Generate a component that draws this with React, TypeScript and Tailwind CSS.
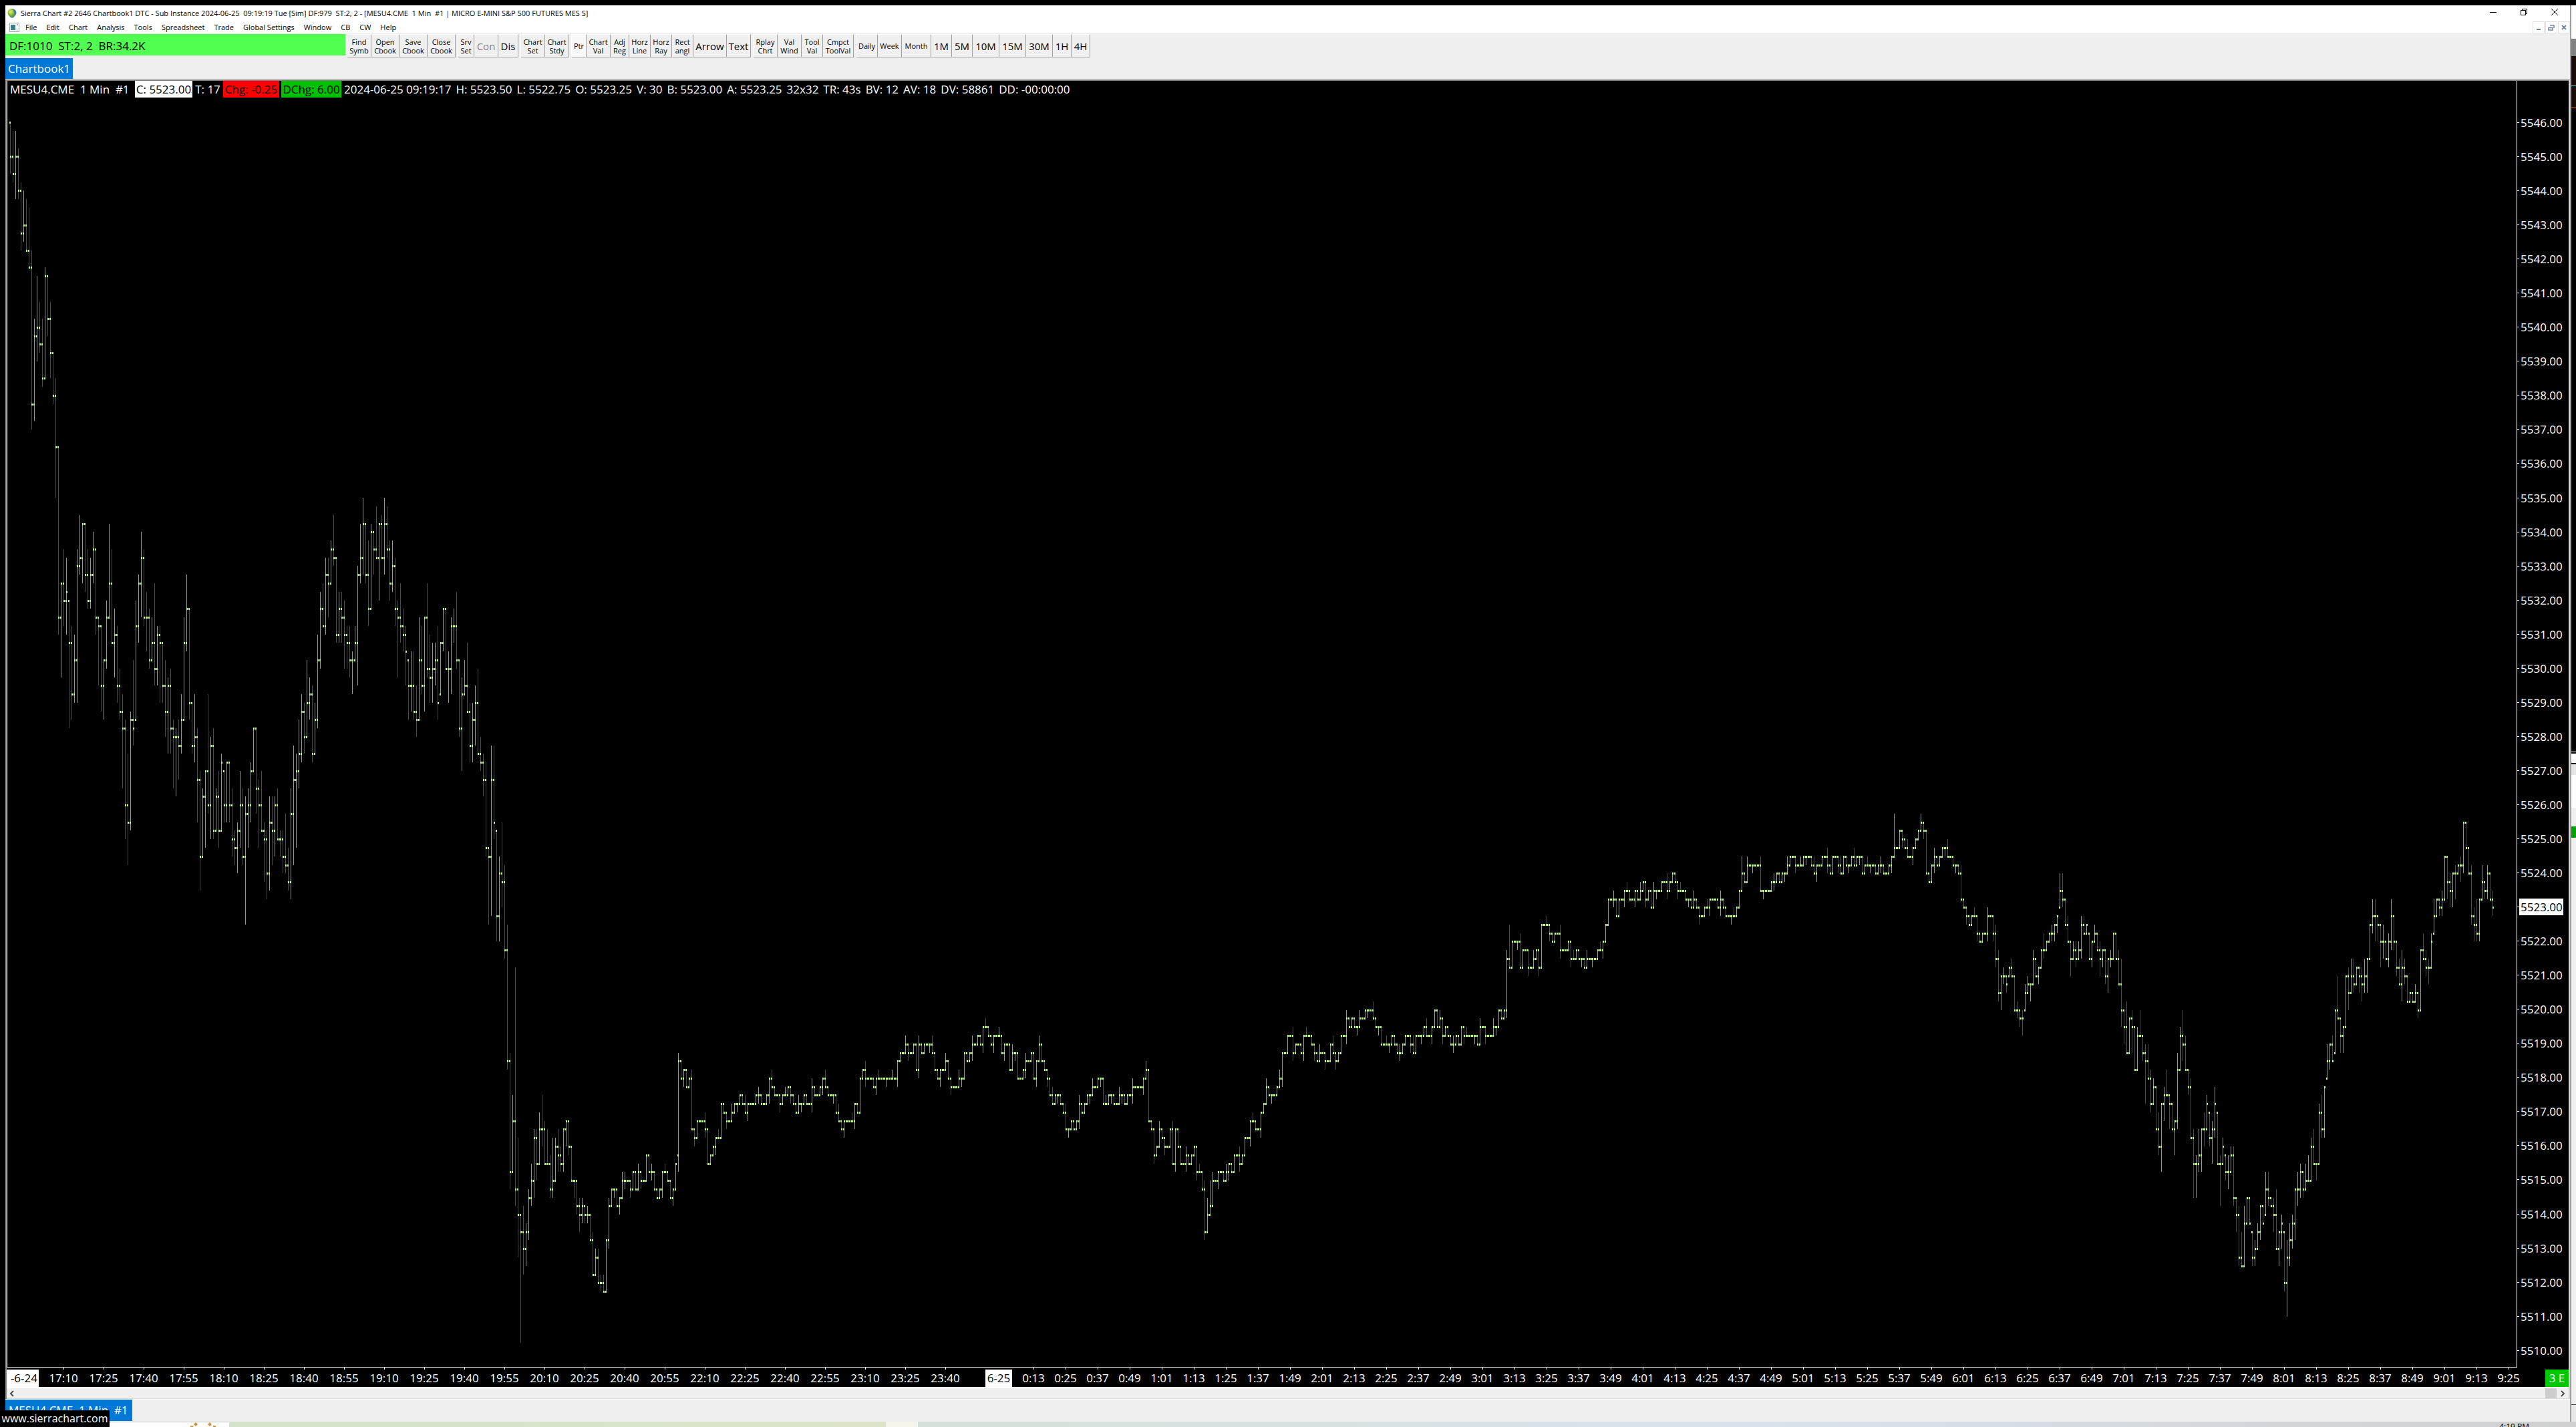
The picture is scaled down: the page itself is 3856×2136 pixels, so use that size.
import { ReactNode } from "react";
import clsx from "clsx";

type Bar = { x: number; open: number; high: number; low: number; close: number };

// All prices below are counted in quarter point ticks above 5510.00
const BASE = 5510;
const TICK = 12.7725;
const BAR_STEP = 4;

// high, low, close
const EVENING = `144 138 140,143 137 138,143 135 140,141 135 136,137 129 131,136 130 132,135 129 129,134 127 127,129 108 111,121 109 119,
126 116 120,123 117 118,121 113 114,127 114 126,126 119 121,123 114 117,117 111 112,114 100 106,106 84 86,90 79 90,
94 85 88,93 84 89,88 73 83,85 74 77,84 76 81,94 76 92,98 91 93,97 90 97,97 89 91,94 87 88,
93 87 91,96 90 94,94 84 86,86 78 85,85 75 78,81 74 81,88 80 86,97 86 90,94 83 83,87 79 84,
85 76 78,80 74 75,77 66 73,74 60 64,70 57 62,75 61 74,81 71 73,88 74 85,91 83 90,96 86 93,
94 85 86,89 82 86,87 80 81,86 81 83,90 78 80,85 78 84,85 76 83,83 76 78,81 72 75,79 70 78,
80 70 73,74 66 72,73 65 72,74 67 71,77 70 74,86 74 83,91 82 87,87 74 76,76 70 71,77 69 72,
73 62 67,68 54 58,66 58 65,68 59 68,77 63 64,72 60 71,73 60 61,66 61 65,68 59 61,70 61 69,
68 62 64,69 62 69,69 62 64,66 58 60,61 57 59,62 56 61,68 59 64,66 57 58,65 50 63,66 59 64,
69 62 68,73 68 73,73 63 66,67 59 64,68 61 61,62 55 60,61 53 56,65 54 62,65 57 61,65 58 64,
66 60 60,61 58 60,61 56 58,63 56 57,59 54 55,66 53 63,71 57 67,70 59 68,74 66 70,77 69 75,
76 70 72,81 72 76,79 74 77,78 69 70,76 70 74,84 73 81,89 80 87,90 85 85,93 84 91,93 86 90,
95 90 94,98 92 93,93 83 84,89 83 87,89 83 86,88 80 84,85 80 83,85 79 81,82 77 81,85 81 83,
92 78 91,97 90 93,100 91 97,97 90 91,95 85 87,97 87 96,96 91 94,99 93 93,97 88 97,98 93 93,
100 91 97,99 93 94,95 88 90,95 89 92,93 85 87,88 79 86,90 83 85,87 82 84,85 78 82,81 74 78,
82 75 78,82 74 75,78 72 74,86 74 81,85 77 78,86 75 86,90 79 80,84 76 79,83 76 80,83 78 81,
85 74 76,83 77 83,87 82 87,87 80 80,82 76 80,86 77 85,87 83 85,89 80 81,81 72 73,79 68 77,
81 77 78,83 75 75,76 69 71,76 69 74,78 71 76,80 70 70,72 68 69,70 65 67,69 58 59,59 50 58,
71 51 67,71 60 62,61 48 51,58 48 56,62 52 55,57 46 47,50 33 34,35 19 21,30 21 27,45 17 19,
25 11 16,16 1 14,17 9 12,15 10 14,19 13 18,22 17 20,26 18 25,26 20 22,28 22 26,30 24 26,
27 22 22,26 22 22,23 18 19,25 18 20,25 20 24,26 21 23,24 21 22,26 21 26,27 24 27,27 23 24,
24 20 20,20 18 20,20 16 17,18 14 16,18 15 17,17 15 16,17 15 16,16 13 13,14 9 9,12 9 11,
12 8 8,9 7 8,9 7 7,13 7 13,18 12 17,19 17 19,19 18 19,19 17 17,18 16 18,21 18 20,21 19 20`;

// Overnight session, closes only, keyed by the index of the first bar
const OVERNIGHT: [number, string][] = [
	[231, "20 19 21 19 21 20 20 23 21 21 19 18 19 21 21 20 18 19 22"],
	[250, "34 32 33 31 32 26 25 27 27 27 26 22 23 24 25 25"],
	[266, "29 28 27 27 28 29 29 30 29 28 29 29 29 30 30 29 29 30"],
	[284, "32 31 30 30 29 30 30 31 30 29 28 29 29 30 29 29 31 30 30 31 32 31 30 30 30 28 27 26 27 27 27 27 29 28"],
	[318, "32 33 32 32 32 31 32 32 32 32 32 32 32 32 34 35 35 36 35 35 36 33 36 35 36 36 36 35 33 32 33 33 34 32 31 31 31 32 32"],
	[357, "35 34 35 36 36 37 36 38 38 37 36 37 37 37 35 36 36 33 35 35 32 32 33 34 34 35 32 34 36"],
	[386, "34 33 32 30 29 30 30 29 28 26 26 27 26 27 29 28 29 30 30 31 31 32 32 29 29 30 30 29 29 30 30 29 30 30 31 31 31 31 32 33"],
	[426, "27 26 23 24 26 25 24 24 26 22 26 24 22 22 23 22 23 24 21 21 19 14 16 17 20 20 21 21 20 21 22 21 23 23 22 23 25 25 27 27"],
	[466, "26 26 28 29 31 30 30 30 31 32 35 35 37 37 35 36 36 35 37 37 37 36 35 34 35 35 34 34 36 35 34 35 37 37"],
	[500, "39 38 39 38 38 39 39 40 40 40 39 38 38 36 36 36 36 37 36 35 35 36 37 37 36 35 37 37 37 38 37 37 38 40 38 39 37 38 37 36"],
	[540, "36 37 36 38 37 37 37 37 37 36 38 38 37 37 37 38 38 40 39 40 46 45 48 48 48 45 47 47 45 45 46 47 45"],
	[573, "50 50 50 49 48 49 49 47 47 47 48 46 46 47 46 46 45 46 46 46 46 47 47 48 50 53 53 53 51 53 53 54 54 53 53 54 53 54"],
	[611, "55 53 54 52 54 54 54 55 55 54 55 56 55 54 54 54 53 53 52 53 52 51 51 52 52 53 53 53 52 53 52 51 51 51 51 52"],
	[647, "54 56 55 57 57 57 57 57 54 54 54 54 55 55 56 55 56 56 57 58 58 57 57 57 58 58 58 57 56 57 57 58 58 57 56 58 58 57 56 58"],
	[687, "57 57 58 57 58 58 56 57 57 57 57 56 57 57 56 56 57 58 59 59 61 60 59 58 58 59 60 61 62 61"],
	[717, "56 55 57 58 57 58 59 59 58 58 57 57 56 53 52 51 50 51 51 49 48 49 49 51 51"],
];

// Wicks that reach further than the usual tick or two
const LONG_WICKS: Record<number, [number, number]> = {
	250: [35, 21],
	447: [20, 13],
	448: [18, 14],
	449: [20, 16],
	561: [50, 45],
	648: [58, 54],
	705: [63, 58],
	715: [63, 61],
};

const MORNING = `51 48 49,50 45 46,47 41 42,44 40 44,45 43 44,44 42 43,45 44 45,46 44 44,44 40 40,41 39 40,
40 38 39,40 37 39,43 40 42,44 42 43,43 41 43,47 43 46,46 44 44,45 43 45,47 45 47,49 46 47,
48 47 48,49 48 49,50 48 49,50 48 50,51 49 51,56 52 54,56 52 53,53 50 50,51 48 48,48 44 46,
48 46 47,48 45 46,48 46 47,51 46 50,51 49 49,50 49 50,49 46 46,48 45 48,50 48 49,49 47 47,
48 44 46,47 45 47,47 43 44,46 42 46,47 45 46,49 46 49,49 46 46,47 43 43,46 38 40,40 36 38,
41 35 35,39 35 39,40 35 38,38 33 33,38 33 37,40 37 37,37 34 35,36 29 34,36 32 32,33 28 29,
32 29 31,31 26 26,28 23 24,29 21 29,31 27 30,33 30 30,30 26 29,29 26 26,27 23 27,35 26 33,
38 33 37,40 34 36,37 33 33,33 30 31,32 25 25,26 18 22,23 18 22,26 21 23,26 21 26,28 24 26,
30 26 29,28 24 25,27 22 26,31 25 29,28 22 22,23 17 22,25 22 24,23 20 21,23 19 21,24 21 23,
24 17 18,18 14 16,17 10 11,14 10 10,17 10 15,18 15 18,18 15 15,14 10 11,13 10 12,15 12 14,
17 13 17,17 15 15,21 16 19,21 17 18,18 17 17,18 14 16,19 12 12,14 10 14,16 12 15,14 7 8,
13 4 11,15 10 13,16 12 15,19 13 19,21 17 19,22 18 21,21 18 19,22 19 20,23 20 20,25 20 24,
26 22 22,22 20 22,29 22 28,30 25 26,31 25 31,36 32 34,36 33 36,37 34 34,40 35 40,44 39 39,
39 35 37,38 35 38,44 38 44,45 40 42,46 42 44,46 42 43,45 43 45,45 42 44,45 41 43,46 42 44,
46 42 46,50 46 50,53 49 51,53 48 51,51 48 50,50 45 48,50 46 48,48 46 46,49 45 48,53 47 51,
51 47 48,48 44 45,46 43 43,47 41 45,46 43 44,44 41 41,42 41 42,42 41 41,43 41 42,42 39 40,
47 40 47,49 46 46,47 44 45,46 43 45,49 45 48,53 49 51,53 51 53,53 51 52,54 51 53,58 53 58,
58 53 55,56 52 54,56 52 56,57 53 56,57 56 57,58 55 57,62 56 62,62 59 59,59 56 56,57 50 51,
52 48 50,53 48 49,53 48 53,57 53 55,55 53 54,57 53 56,56 53 53,54 51 52`;

function buildBars(): Bar[] {
	const bars: Bar[] = [];
	let prev = 144;

	const addFull = (start: number, data: string) => {
		data.split(",").forEach((row, i) => {
			const [high, low, close] = row.trim().split(" ").map(Number);
			const open = Math.min(high, Math.max(low, prev));
			bars.push({ x: 5 + (start + i) * BAR_STEP, open, high, low, close });
			prev = close;
		});
	};

	addFull(0, EVENING);
	OVERNIGHT.forEach(([start, data]) => {
		data.split(" ").map(Number).forEach((close, i) => {
			const n = start + i;
			const open = Math.abs(close - prev) > 8 ? prev + 1 : prev;
			const up = (n * 7) % 5 === 0 ? 1 : 0;
			const down = (n * 11) % 4 === 0 ? 1 : 0;
			let high = Math.max(open, close) + up;
			let low = Math.min(open, close) - down;
			const wick = LONG_WICKS[n];
			if (wick) {
				high = wick[0];
				low = wick[1];
			}
			bars.push({ x: 5 + n * BAR_STEP, open, high, low, close });
			prev = close;
		});
	});
	addFull(742, MORNING);
	return bars;
}

const bars = buildBars();
const toY = (q: number) => Math.round(62.3 + (144 - q) * TICK);

const barPath = (list: Bar[]) => list.map((b) => `M${b.x} ${toY(b.high)}h1V${toY(b.low)}h-1z`).join("");
const upPath = barPath(bars.filter((b, i) => b.close > b.open || (b.close === b.open && i % 2 === 0)));
const downPath = barPath(bars.filter((b, i) => b.close < b.open || (b.close === b.open && i % 2 === 1)));
const dotPath = bars
	.map((b) => `M${b.x - 1} ${toY(b.open) - 1}h2v3h-2zM${b.x} ${toY(b.close) - 1}h2v3h-2z`)
	.join("");

const prices = Array.from({ length: 37 }, (_, i) => BASE + 36 - i);

const clock = (m: number) => `${Math.floor(m / 60)}:${String(m % 60).padStart(2, "0")}`;
const eveningTimes = [
	...Array.from({ length: 16 }, (_, i) => clock(17 * 60 + 10 + i * 15)),
	...Array.from({ length: 7 }, (_, i) => clock(22 * 60 + 10 + i * 15)),
];
const morningTimes = Array.from({ length: 47 }, (_, i) => clock(13 + i * 12));

const menus = ["File", "Edit", "Chart", "Analysis", "Tools", "Spreadsheet", "Trade", "Global Settings", "Window", "CB", "CW", "Help"];

const quote = [
	"2024-06-25 09:19:17",
	"H: 5523.50",
	"L: 5522.75",
	"O: 5523.25",
	"V: 30",
	"B: 5523.00",
	"A: 5523.25",
	"32x32",
	"TR: 43s",
	"BV: 12",
	"AV: 18",
	"DV: 58861",
	"DD: -00:00:00",
];

type Tool = { label: string; w: string; big?: boolean; off?: boolean; pressed?: boolean };

const toolGroups: Tool[][] = [
	[
		{ label: "Find Symb", w: "w-9" },
		{ label: "Open Cbook", w: "w-[42px]" },
		{ label: "Save Cbook", w: "w-[42px]" },
		{ label: "Close Cbook", w: "w-[42px]" },
	],
	[
		{ label: "Srv Set", w: "w-6" },
		{ label: "Con", w: "w-9", big: true, off: true },
		{ label: "Dis", w: "w-[30px]", big: true },
	],
	[
		{ label: "Chart Set", w: "w-9" },
		{ label: "Chart Stdy", w: "w-9" },
	],
	[
		{ label: "Ptr", w: "w-[22px]", pressed: true },
		{ label: "Chart Val", w: "w-9" },
		{ label: "Adj Reg", w: "w-7" },
		{ label: "Horz Line", w: "w-8" },
		{ label: "Horz Ray", w: "w-8" },
		{ label: "Rect angl", w: "w-8" },
		{ label: "Arrow", w: "w-[50px]", big: true },
		{ label: "Text", w: "w-9", big: true },
	],
	[
		{ label: "Rplay Chrt", w: "w-9" },
		{ label: "Val Wind", w: "w-9" },
		{ label: "Tool Val", w: "w-8" },
		{ label: "Cmpct ToolVal", w: "w-[46px]" },
	],
	[
		{ label: "Daily", w: "w-8" },
		{ label: "Week", w: "w-9" },
		{ label: "Month", w: "w-11" },
		{ label: "1M", w: "w-[31px]", big: true },
		{ label: "5M", w: "w-[31px]", big: true },
		{ label: "10M", w: "w-10", big: true },
		{ label: "15M", w: "w-10", big: true },
		{ label: "30M", w: "w-10", big: true },
		{ label: "1H", w: "w-7", big: true },
		{ label: "4H", w: "w-7", big: true },
	],
];

function ToolButton({ tool }: { tool: Tool }) {
	return (
		<button
			type="button"
			disabled={tool.off}
			className={clsx(
				"flex h-[35px] flex-col items-center justify-center whitespace-nowrap border-r border-b border-b-[#a0a0a0] border-r-[#a0a0a0] border-t border-t-white",
				tool.w,
				tool.big ? "text-[15px] leading-5" : "text-[11px] leading-[13px]",
				tool.off && "text-[#838383]",
				tool.pressed && "bg-[#f8f8f8]"
			)}
		>
			{tool.label.split(" ").map((line) => (
				<span key={line}>{line}</span>
			))}
		</button>
	);
}

function MdiButton({ label, children }: { label: string; children: ReactNode }) {
	return (
		<button type="button" aria-label={label} className="flex h-[18px] w-[18px] items-center justify-center border border-[#e0e0e0]">
			<svg viewBox="0 0 10 10" className="h-2.5 w-2.5" fill="none" stroke="#74859a" strokeWidth="2">
				{children}
			</svg>
		</button>
	);
}

function TitleBar() {
	return (
		<header className="flex h-6 items-center bg-white pl-[3px] pr-[17px]">
			<svg viewBox="0 0 14 16" className="h-4 w-3.5">
				<defs>
					<radialGradient id="bulb" cx="0.35" cy="0.35" r="0.75">
						<stop offset="0" stopColor="#e8f26a" />
						<stop offset="0.5" stopColor="#7cb82c" />
						<stop offset="1" stopColor="#2f6b8e" />
					</radialGradient>
				</defs>
				<path d="M7 1C3 1 0.5 4 0.5 7.300C0.500 10.500 4 12.500 5 14.500H9C10 12.500 13.500 10.500 13.500 7.300C13.500 4 11 1 7 1Z" fill="url(#bulb)" />
				<path d="M8 2C11 4 9 8 12 10C14 7 13 2.500 8 2Z" fill="#2b83c6" />
			</svg>
			<h1 className="ml-1.5 whitespace-pre text-[11px] leading-4">
				Sierra Chart #2 2646 Chartbook1 DTC - Sub Instance 2024-06-25  09:19:19 Tue [Sim] DF:979  ST:2, 2 - [MESU4.CME  1 Min  #1 | MICRO E-MINI S&amp;P 500 FUTURES MES S]
			</h1>
			<div className="ml-auto flex items-center gap-[34px] pb-1">
				<button type="button" aria-label="Minimize">
					<svg viewBox="0 0 12 12" className="h-3 w-3" stroke="#000"><path d="M1 6.500H11" /></svg>
				</button>
				<button type="button" aria-label="Restore">
					<svg viewBox="0 0 12 12" className="h-3 w-3" stroke="#000" fill="none"><path d="M1.500 3.500H8.500V10.500H1.500ZM3.500 3.500V1.500H10.500V8.500H8.500" /></svg>
				</button>
				<button type="button" aria-label="Close">
					<svg viewBox="0 0 12 12" className="h-3 w-3" stroke="#000"><path d="M1 1L11 11M11 1L1 11" /></svg>
				</button>
			</div>
		</header>
	);
}

function MenuBar() {
	return (
		<nav className="flex h-[17px] items-center bg-white pl-1.5">
			<svg viewBox="0 0 15 14" className="h-3.5 w-[15px]">
				<path d="M0.500 0.500H14.500V13.500H0.500Z" fill="#fff" stroke="#9aa5b1" />
				<path d="M2 3H9V11H2Z" fill="#3d7f88" />
				<path d="M11 3H13M11 11H12" stroke="#555" />
			</svg>
			<div className="ml-[9px] flex gap-3.5 text-[11px] leading-4">
				{menus.map((m) => (
					<button key={m} type="button">{m}</button>
				))}
			</div>
			<div className="ml-auto flex gap-px">
				<MdiButton label="Minimize chart"><path d="M2 8H8" /></MdiButton>
				<MdiButton label="Restore chart"><path d="M1 5.500H7V9H1ZM3 2H9V6" strokeWidth="1.500" /></MdiButton>
				<MdiButton label="Close chart"><path d="M2 2L8 8M8 2L2 8" /></MdiButton>
			</div>
		</nav>
	);
}

function Toolbar() {
	return (
		<div className="flex h-[38px] items-start pt-0.5">
			<div className="h-8 w-[509px] whitespace-pre bg-[#50ff50] pl-1.5 text-[17px] leading-9">DF:1010  ST:2, 2  BR:34.2K</div>
			<div className="ml-0.5 flex gap-[3px]">
				{toolGroups.map((group, i) => (
					<div key={i} className="flex border-l border-white">
						{group.map((tool) => (
							<ToolButton key={tool.label} tool={tool} />
						))}
					</div>
				))}
			</div>
		</div>
	);
}

function InfoLine() {
	return (
		<div className="absolute left-[5px] top-0 flex h-[25px] whitespace-pre text-[17px] leading-[25px] text-white">
			<span className="w-[187px]">MESU4.CME  1 Min  #1</span>
			<span className="w-[86px] bg-white text-center text-black">C: 5523.00</span>
			<span className="w-[46px] text-center">T: 17</span>
			<span className="w-[84px] bg-[#ff0000] text-center text-black">Chg: -0.25</span>
			<span className="ml-[3px] w-[90px] bg-[#00c000] text-center text-black">DChg: 6.00</span>
			<div className="ml-1 flex gap-[7px]">
				{quote.map((q) => (
					<span key={q}>{q}</span>
				))}
			</div>
		</div>
	);
}

function PriceAxis() {
	return (
		<div className="flex w-[77px] flex-col pt-[37px] text-[17px] leading-[25px] text-white">
			{prices.map((p) => (
				<div key={p} className="flex min-h-0 flex-1 items-center">
					<span className="h-px w-[3px] bg-white" />
					<span className={clsx("w-[66px] pl-0.5", p === 5523 && "bg-white text-black")}>{p.toFixed(2)}</span>
				</div>
			))}
		</div>
	);
}

function TimeLabel({ text, wide }: { text: string; wide?: boolean }) {
	return (
		<div className={clsx("flex min-w-0 flex-col items-center", wide ? "flex-[60]" : "flex-[48]")}>
			<span className="h-[3px] w-px bg-white" />
			<span>{text}</span>
		</div>
	);
}

function TimeAxis() {
	return (
		<div className="flex h-[29px] bg-black text-[17px] leading-[26px] text-white">
			<div className="min-w-0 flex-[55] pt-[3px]">
				<span className="flex w-12 justify-end overflow-hidden bg-white pr-0.5 text-black">-6-24</span>
			</div>
			{eveningTimes.map((t) => <TimeLabel key={t} text={t} wide />)}
			<div className="flex min-w-0 flex-[78] justify-end pt-[3px]">
				<span className="mr-2 w-10 bg-white text-center text-black">6-25</span>
			</div>
			{morningTimes.map((t) => <TimeLabel key={t} text={t} />)}
			<div className="flex min-w-0 flex-[66] justify-end pt-[3px]">
				<span className="w-[35px] bg-[#00c800] text-center">3 E</span>
			</div>
		</div>
	);
}

function Chart() {
	return (
		<main className="flex min-h-0 flex-1 flex-col border-l-2 border-r-2 border-l-[#8a8a8a] border-r-[#d4d4d4] border-t-2 border-t-[#808080] bg-black">
			<div className="relative flex min-h-0 flex-1">
				<div className="min-w-0 flex-1 border-b border-l border-r border-white">
					<svg viewBox="1 0 3756 1925" preserveAspectRatio="none" className="block h-full w-full" shapeRendering="crispEdges">
						<path d={upPath} fill="#00ff00" />
						<path d={downPath} fill="#ff0000" />
						<path d={dotPath} fill="#c0ff80" />
					</svg>
				</div>
				<PriceAxis />
				<InfoLine />
			</div>
			<TimeAxis />
			<div className="flex h-[18px] items-center border-b border-t-2 border-b-[#dcdcdc] border-t-white bg-[#f0f0f0]">
				<button type="button" aria-label="Scroll left" className="pl-1">
					<svg viewBox="0 0 8 10" className="h-2.5 w-2" fill="none" stroke="#505050" strokeWidth="2"><path d="M6 1L2 5L6 9" /></svg>
				</button>
				<span className="ml-auto h-[15px] w-[17px] bg-[#cdcdcd]" />
				<button type="button" aria-label="Scroll right" className="px-[5px]">
					<svg viewBox="0 0 8 10" className="h-2.5 w-2" fill="none" stroke="#505050" strokeWidth="2"><path d="M2 1L6 5L2 9" /></svg>
				</button>
			</div>
		</main>
	);
}

// Sliver of the window that sits behind on the right
function NextWindow() {
	return (
		<aside className="flex w-[9px] flex-col border-l-2 border-[#a0a0a0] bg-[#f0f0f0]">
			<div className="h-[50px] bg-white" />
			<div className="h-[26px] bg-[#808080]" />
			<div className="h-11 bg-[#180c06]" />
			<div className="h-px bg-[#60e0e0]" />
			<div className="h-8 bg-[#180c06]" />
			<div className="h-px bg-[#f07830]" />
			<div className="h-[964px] border-b border-white bg-black" />
			<div className="h-[18px] border-y-2 border-black bg-white" />
			<div className="h-4 bg-[#e4e4e4]" />
			<div className="h-[49px] bg-white" />
			<div className="h-7" />
			<div className="h-[17px] bg-[#00a000]" />
			<div className="flex-1" />
			<div className="h-[26px] border-t border-[#404040] bg-[#e8e8e8]" />
		</aside>
	);
}

function Desktop() {
	return (
		<footer className="flex h-2 overflow-hidden bg-[#d4d6d8]">
			<div className="flex w-[343px] justify-end border-t border-[#c8c8c8] bg-white pr-5">
				<svg viewBox="0 0 40 7" className="h-[7px] w-10" fill="#d09040">
					<path d="M10 0L13 3L10 6L7 3ZM31 0L34 3L31 6L28 3ZM2 5H6V7H2ZM36 5H40V7H36Z" />
				</svg>
			</div>
			<div className="w-[983px] bg-gradient-to-r from-[#d3e3cb] to-[#dbe4c8]" />
			<div className="w-12 bg-[#f4f4ea]" />
			<div className="flex flex-1 justify-end bg-gradient-to-r from-[#d5e0d8] via-[#d9e2ec] to-[#d0d0d0] pr-[70px] text-[12px] leading-4">4:19 PM</div>
		</footer>
	);
}

export default function App() {
	return (
		<div className="relative flex h-screen flex-col overflow-hidden bg-black pt-2 font-['Open_Sans',sans-serif] text-black">
			<div className="flex min-h-0 flex-1 pl-2">
				<div className="flex min-w-0 flex-1 flex-col bg-[#f0f0f0]">
					<TitleBar />
					<MenuBar />
					<Toolbar />
					<div className="flex h-8">
						<button type="button" className="h-[31px] w-[101px] bg-[#0078d7] text-[17px] text-white">Chartbook1</button>
					</div>
					<Chart />
					<div className="flex h-[34px] border-t border-white">
						<button type="button" className="h-8 w-[190px] whitespace-pre bg-[#0078d7] pl-[5px] text-left text-[17px] text-white">MESU4.CME  1 Min  #1</button>
					</div>
				</div>
				<NextWindow />
			</div>
			<Desktop />
			<a href="#" className="absolute bottom-0 left-0 h-[25px] w-[164px] bg-black text-center text-[16px] leading-[25px] text-white">www.sierrachart.com</a>
		</div>
	);
}
